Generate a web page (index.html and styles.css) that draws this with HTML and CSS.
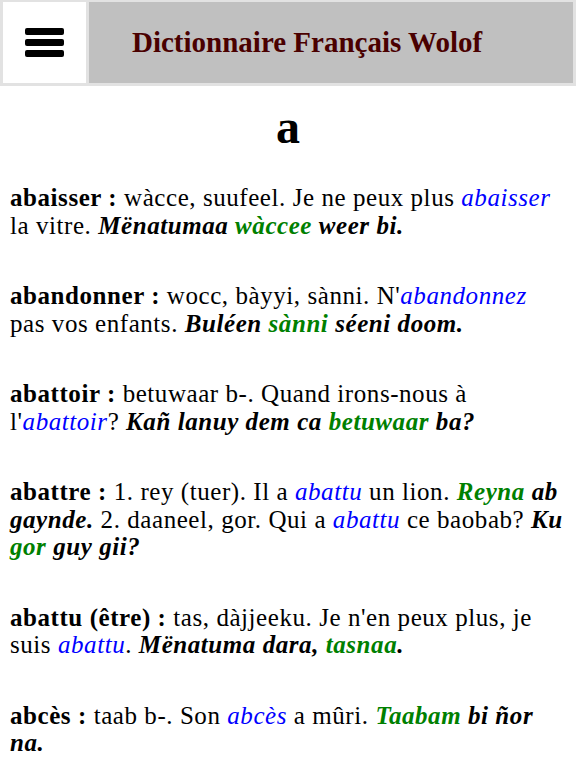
FILE: index.html
```html
<!DOCTYPE html>
<html lang="fr">
<head>
<meta charset="utf-8">
<title>Dictionnaire Français Wolof</title>
<link rel="stylesheet" href="styles.css">
</head>
<body>
<header class="topbar">
  <div class="menu-btn" aria-label="Menu">
    <span class="bar"></span><span class="bar"></span><span class="bar"></span>
  </div>
  <div class="title-box"><h1 class="site-title">Dictionnaire Français Wolof</h1></div>
</header>
<main class="content">
  <h2 class="letter">a</h2>
  <p class="entry"><b>abaisser :</b> wàcce, suufeel. Je ne peux plus <i class="fr">abaisser</i> la vitre. <b><i>Mënatumaa <span class="wo">wàccee</span> weer bi.</i></b></p>
  <p class="entry"><b>abandonner :</b> wocc, bàyyi, sànni. N'<i class="fr">abandonnez</i> pas vos enfants. <b><i>Buléen <span class="wo">sànni</span> séeni doom.</i></b></p>
  <p class="entry"><b>abattoir :</b> betuwaar b-. Quand irons-nous à l'<i class="fr">abattoir</i>? <b><i>Kañ lanuy dem ca <span class="wo">betuwaar</span> ba?</i></b></p>
  <p class="entry"><b>abattre :</b> 1. rey (tuer). Il a <i class="fr">abattu</i> un lion. <b><i><span class="wo">Reyna</span> ab gaynde.</i></b> 2. daaneel, gor. Qui a <i class="fr">abattu</i> ce baobab? <b><i>Ku <span class="wo">gor</span> guy gii?</i></b></p>
  <p class="entry"><b>abattu (être) :</b> tas, dàjjeeku. Je n'en peux plus, je suis <i class="fr">abattu</i>. <b><i>Mënatuma dara, <span class="wo">tasnaa</span>.</i></b></p>
  <p class="entry"><b>abcès :</b> taab b-. Son <i class="fr">abcès</i> a mûri. <b><i><span class="wo">Taabam</span> bi ñor na.</i></b></p>
</main>
</body>
</html>
```

FILE: styles.css
```css
html, body {
  margin: 0;
  padding: 0;
  background: #ffffff;
}
body {
  font-family: "Liberation Serif", "Times New Roman", serif;
  color: #000;
}
.topbar {
  display: flex;
  gap: 3px;
  padding: 2px 3px 3px 3px;
  background: #e2e2e2;
  height: 81px;
}
.menu-btn {
  width: 83px;
  background: #ffffff;
  display: flex;
  flex-direction: column;
  align-items: center;
  justify-content: center;
  gap: 4px;
}
.bar {
  display: block;
  width: 39px;
  height: 7px;
  background: #000;
  border-radius: 2px;
}
.title-box {
  flex: 1;
  background: #c0c0c0;
  display: flex;
  align-items: center;
  padding-left: 43px;
}
.site-title {
  margin: 0;
  font-size: 29px;
  font-weight: bold;
  color: #4a0000;
}
.content {
  padding: 0 10px;
}
.letter {
  margin: 13px 0 29px;
  text-align: center;
  font-size: 48px;
  line-height: 56px;
  font-weight: bold;
}
.entry {
  margin: 0 0 43px;
  font-size: 25px;
  line-height: 27.5px;
  letter-spacing: 0.56px;
}
.fr {
  color: #0000ff;
}
.wo {
  color: #008000;
}
```
